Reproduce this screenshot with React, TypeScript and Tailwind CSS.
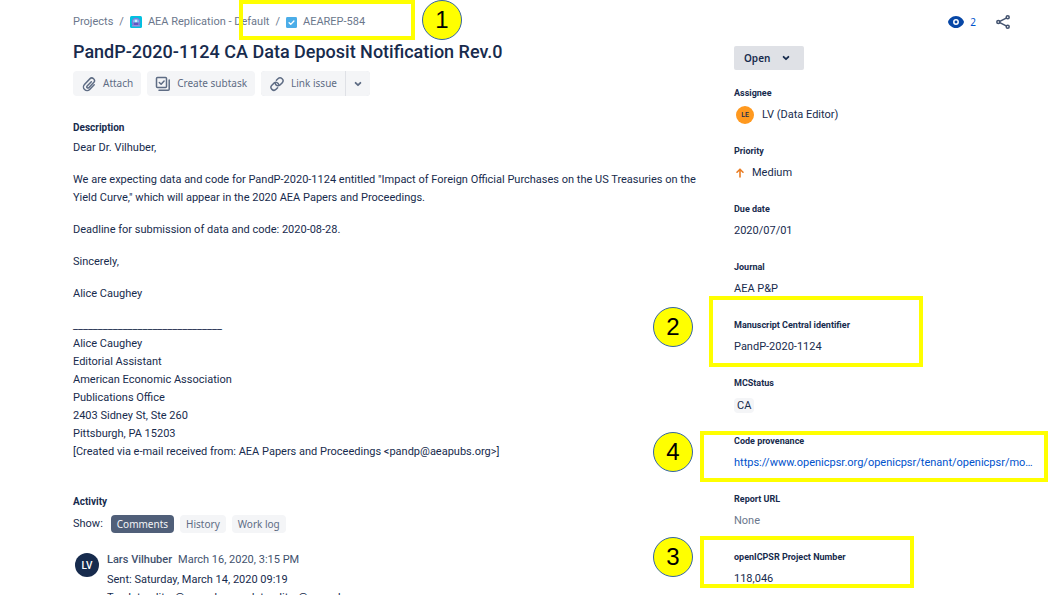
import React from 'react';

const noto = "font-['Noto_Sans',sans-serif]";

function AttachIcon() {
  return (
    <svg width="16" height="16" viewBox="0 0 24 24" fill="none" stroke="currentColor" strokeWidth="2.2" strokeLinecap="round" aria-hidden="true">
      <path d="m15.5 8.500-6.300 6.600a1.700 1.700 0 0 0 2.500 2.400l7.300-7.600a4 4 0 0 0-5.800-5.600l-8 8.400a5.400 5.400 0 0 0 7.800 7.500l6.800-7" />
    </svg>
  );
}

function SubtaskIcon() {
  return (
    <svg width="16" height="16" viewBox="0 0 16 16" fill="none" stroke="currentColor" strokeWidth="1.5" strokeLinecap="round" strokeLinejoin="round" aria-hidden="true">
      <rect x="1.500" y="1.500" width="10" height="10" rx="1" />
      <path d="m4.300 6.500 1.800 1.800 3-3.200M14.200 4v9.200a1 1 0 0 1-1 1H4" />
    </svg>
  );
}

function LinkIcon() {
  return (
    <svg width="16" height="16" viewBox="0 0 24 24" fill="none" stroke="currentColor" strokeWidth="2.2" strokeLinecap="round" aria-hidden="true">
      <path d="M12.900 17.600 10.600 20a4.400 4.400 0 0 1-6.300-6.200l3.600-3.500a4.400 4.400 0 0 1 6.800 2.800" />
      <path d="m11.100 6.400 2.300-2.300a4.400 4.400 0 0 1 6.300 6.200l-3.600 3.500a4.400 4.400 0 0 1-6.800-2.800" />
    </svg>
  );
}

function ChevronIcon() {
  return (
    <svg width="8" height="8" viewBox="0 0 8 8" fill="none" stroke="currentColor" strokeWidth="1.8" strokeLinecap="round" strokeLinejoin="round" aria-hidden="true">
      <path d="M1.600 2.800 4 5.200l2.400-2.400" />
    </svg>
  );
}

function ProjectIcon() {
  return (
    <svg width="12" height="12" viewBox="0 0 24 24" aria-hidden="true">
      <rect width="24" height="24" rx="3" fill="#00c1e0" />
      <circle cx="12" cy="12" r="7.500" fill="#79c4f0" stroke="#8777d9" strokeWidth="2.500" />
      <path d="M6.500 13h11l-1.500 5H8z" fill="#6554c0" />
      <path d="M4.500 18h15l1 3h-17z" fill="#998dd9" />
      <circle cx="12" cy="10" r="2.500" fill="#deebff" />
    </svg>
  );
}

function TaskIcon() {
  return (
    <svg width="11" height="11" viewBox="0 0 16 16" aria-hidden="true">
      <rect width="16" height="16" rx="2" fill="#4bade8" />
      <path d="m4.500 8.300 2.400 2.400 4.600-5" fill="none" stroke="#fff" strokeWidth="2" strokeLinecap="round" strokeLinejoin="round" />
    </svg>
  );
}

function WatchIcon() {
  return (
    <svg width="16" height="12" viewBox="0 0 16 12" aria-hidden="true">
      <path d="M8 0C3.600 0 .9 3.400.2 5.300a2 2 0 0 0 0 1.400C.9 8.600 3.600 12 8 12s7.100-3.400 7.800-5.300a2 2 0 0 0 0-1.400C15.100 3.400 12.400 0 8 0Z" fill="#0747a6" />
      <circle cx="8" cy="6" r="2.200" fill="none" stroke="#fff" strokeWidth="1.500" />
    </svg>
  );
}

function ShareIcon() {
  return (
    <svg width="14" height="14" viewBox="0 0 14 14" fill="none" stroke="#42526e" strokeWidth="1.500" aria-hidden="true">
      <circle cx="2.300" cy="7" r="1.500" />
      <circle cx="11.700" cy="2.300" r="1.500" />
      <circle cx="11.700" cy="11.700" r="1.500" />
      <path d="m3.800 6.300 6.400-3.200M3.800 7.700l6.400 3.200" />
    </svg>
  );
}

function Marker({ n, place }: { n: number; place: string }) {
  return (
    <span className={`absolute flex size-10 items-center justify-center rounded-full border border-[#3465a4] bg-[#ffff00] font-['Liberation_Sans',sans-serif] text-2xl text-black ${place}`}>
      {n}
    </span>
  );
}

function Highlight({ place }: { place: string }) {
  return <span aria-hidden="true" className={`pointer-events-none absolute border-4 border-[#ffff00] ${place}`} />;
}

function Field({ label, children }: { label: string; children: React.ReactNode }) {
  return (
    <div className="relative flex flex-col gap-1.5">
      <dt className="text-[9px] leading-3 font-bold">{label}</dt>
      <dd className="flex h-5 items-center text-[11px]">{children}</dd>
    </div>
  );
}

const signature = [
  '______________________________',
  'Alice Caughey',
  'Editorial Assistant',
  'American Economic Association',
  'Publications Office',
  '2403 Sidney St, Ste 260',
  'Pittsburgh, PA 15203',
  '[Created via e-mail received from: AEA Papers and Proceedings <pandp@aeapubs.org>]',
];

export default function App() {
  const action = `flex h-full items-center gap-1.5 bg-[#f4f5f7] px-2 text-[10px] text-[#5e6c84] ${noto}`;
  const tab = `h-[18px] rounded-sm px-1.5 text-[10px] leading-[18px] ${noto}`;
  return (
    <div className="h-screen overflow-hidden bg-white pr-6 pl-[73px] font-['Roboto',sans-serif] text-[11px] text-[#172b4d]">
      <header className="flex items-center justify-between pt-2.5">
        <nav aria-label="Breadcrumb" className="relative flex h-6 items-center gap-1.5 text-[#6b778c]">
          <a href="#projects">Projects</a>
          <span>/</span>
          <a href="#project" className="flex items-center gap-1.5"><ProjectIcon />AEA Replication - Default</a>
          <span>/</span>
          <a href="#issue" className="flex items-center gap-1.5"><TaskIcon />AEAREP-584</a>
          <Highlight place="-top-2.5 left-[166px] h-10 w-44" />
          <Marker n={1} place="-top-2.5 left-[349px]" />
        </nav>
        <div className="flex items-center gap-5 pr-6">
          <button type="button" aria-label="Watchers: 2" className={`flex items-center gap-1.5 text-[10px] text-[#0052cc] ${noto}`}><WatchIcon />2</button>
          <button type="button" aria-label="Share"><ShareIcon /></button>
        </div>
      </header>

      <div className="flex gap-8">
        <main className="min-w-0 flex-1 pt-1.5">
          <h1 className="text-[18px] leading-6 font-medium">PandP-2020-1124 CA Data Deposit Notification Rev.0</h1>
          <div className="mt-[7px] flex h-[25px] gap-1.5">
            <button type="button" className={`${action} rounded-sm`}><AttachIcon />Attach</button>
            <button type="button" className={`${action} rounded-sm`}><SubtaskIcon />Create subtask</button>
            <div className="flex gap-px rounded-sm bg-[#dfe1e6]">
              <button type="button" className={`${action} rounded-l-sm`}><LinkIcon />Link issue</button>
              <button type="button" aria-label="More link options" className={`${action} rounded-r-sm`}><ChevronIcon /></button>
            </div>
          </div>

          <section className="mt-[25px] leading-[18px]">
            <h2 className="text-[10px] leading-[14px] font-bold">Description</h2>
            <div className="mt-1 flex flex-col gap-3.5">
              <p>Dear Dr. Vilhuber,</p>
              <p>We are expecting data and code for PandP-2020-1124 entitled "Impact of Foreign Official Purchases on the US Treasuries on the Yield Curve," which will appear in the 2020 AEA Papers and Proceedings.</p>
              <p>Deadline for submission of data and code: 2020-08-28.</p>
              <p>Sincerely,</p>
              <p>Alice Caughey</p>
              <p>{signature.map((line) => <span key={line} className="block">{line}</span>)}</p>
            </div>
          </section>

          <section className="mt-[34px]">
            <h2 className="text-[10px] leading-[14px] font-bold">Activity</h2>
            <div className="mt-1.5 flex items-center gap-1.5">
              <span className="pr-0.5">Show:</span>
              <button type="button" className={`${tab} bg-[#505f79] text-[#f4f5f7]`}>Comments</button>
              <button type="button" className={`${tab} bg-[#f4f5f7] text-[#5e6c84]`}>History</button>
              <button type="button" className={`${tab} bg-[#f4f5f7] text-[#5e6c84]`}>Work log</button>
            </div>
            <article className="mt-[18px] flex gap-2 pl-0.5">
              <span className="mt-0.5 flex size-6 shrink-0 items-center justify-center rounded-full bg-[#172b4d] text-[10px] font-medium text-white">LV</span>
              <div className="leading-[18px]">
                <p className="mb-0.5 text-[#42526e]"><span className="mr-1.5 font-medium">Lars Vilhuber</span>March 16, 2020, 3:15 PM</p>
                <p>Sent: Saturday, March 14, 2020 09:19</p>
                <p>To: dataeditor@aeapubs.org dataeditor@aeapubs.org</p>
              </div>
            </article>
          </section>
        </main>

        <aside className="w-[300px] shrink-0 pt-3">
          <button type="button" className={`flex h-6 items-center gap-3 rounded-xs bg-[#dfe1e6] pr-3.5 pl-2.5 text-[10px] font-semibold ${noto}`}>Open<ChevronIcon /></button>
          <dl className="mt-[17px] flex flex-col gap-5">
            <Field label="Assignee">
              <span className="mr-2 ml-0.5 flex size-[18px] items-center justify-center rounded-full bg-[#ff991f] text-[7px] font-medium">LE</span>
              LV (Data Editor)
            </Field>
            <Field label="Priority">
              <svg className="mr-1.5" width="12" height="12" viewBox="0 0 12 12" fill="none" stroke="#ea7d24" strokeWidth="1.600" strokeLinecap="round" strokeLinejoin="round" aria-hidden="true">
                <path d="M6 10V2.500M3 5.200l3-3 3 3" />
              </svg>
              Medium
            </Field>
            <Field label="Due date">2020/07/01</Field>
            <Field label="Journal">AEA P&amp;P</Field>
            <Field label="Manuscript Central identifier">
              PandP-2020-1124
              <Highlight place="-top-[23px] -left-[25px] h-[71px] w-[214px]" />
              <Marker n={2} place="-top-3 -left-[81px]" />
            </Field>
            <Field label="MCStatus"><span className="rounded-sm bg-[#f4f5f7] px-[3px] leading-[15px]">CA</span></Field>
            <Field label="Code provenance">
              <a href="#provenance" className="whitespace-nowrap text-[#0052cc]">https://www.openicpsr.org/openicpsr/tenant/openicpsr/mo…</a>
              <Highlight place="-top-1 -left-[34px] h-[51px] w-[348px]" />
              <Marker n={4} place="-top-[3px] -left-[81px]" />
            </Field>
            <Field label="Report URL"><span className="text-[#6b778c]">None</span></Field>
            <Field label="openICPSR Project Number">
              118,046
              <Highlight place="-top-[15px] -left-[34px] h-[52px] w-[214px]" />
              <Marker n={3} place="-top-3.5 -left-[81px]" />
            </Field>
          </dl>
        </aside>
      </div>
    </div>
  );
}
